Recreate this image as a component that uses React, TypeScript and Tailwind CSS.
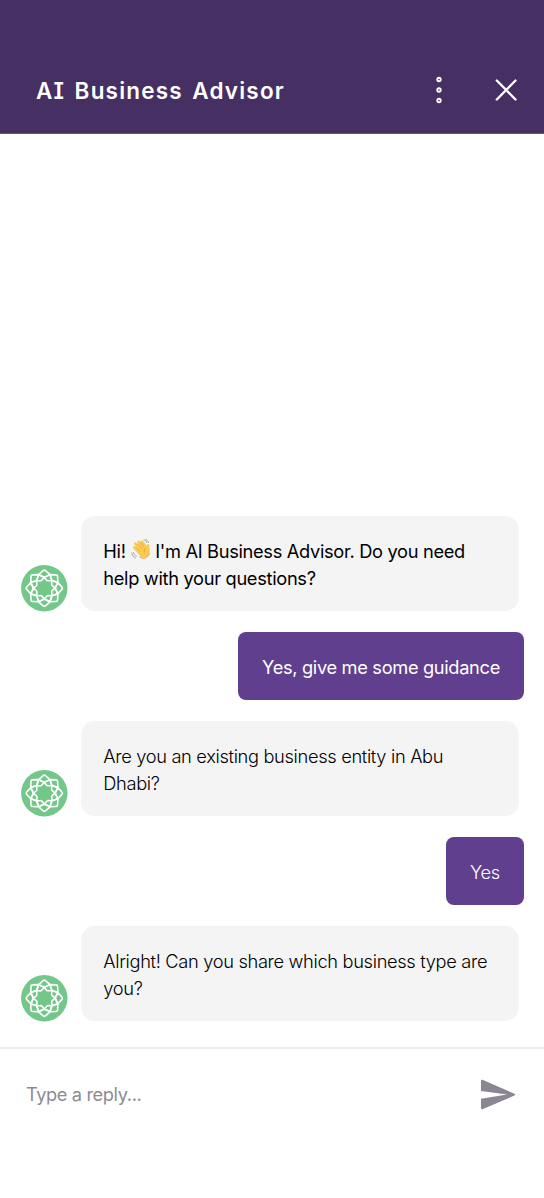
import { clsx } from "clsx";

const petals = [0, 45, 90, 135, 180, 225, 270, 315];

type Message = {
  from: "bot" | "user";
  lines: string[];
  style: string;
};

const messages: Message[] = [
  {
    from: "bot",
    lines: ["Hi! 👋 I'm AI Business Advisor. Do you need", "help with your questions?"],
    style: "font-normal tracking-[-0.32px]",
  },
  { from: "user", lines: ["Yes, give me some guidance"], style: "w-[286px] font-[370] tracking-[-0.34px]" },
  {
    from: "bot",
    lines: ["Are you an existing business entity in Abu", "Dhabi?"],
    style: "font-light tracking-[-0.33px]",
  },
  { from: "user", lines: ["Yes"], style: "w-[78px] font-light tracking-[-0.3px]" },
  {
    from: "bot",
    lines: ["Alright! Can you share which business type are", "you?"],
    style: "font-light tracking-[-0.33px]",
  },
];

export default function App() {
  return (
    <div className="flex h-[1198px] w-[544px] flex-col bg-white font-['Inter',sans-serif]">
      <header className="flex h-[134px] shrink-0 items-end border-b border-[#66527d] bg-[#462f62] pr-[27px] pb-[26px] pl-[36px]">
        <h1 className="flex-1 translate-y-px text-[22.5px] leading-[34px] font-semibold tracking-[1.2px] [word-spacing:2.5px] whitespace-nowrap text-white [font-feature-settings:'cv08']">
          AI Business Advisor
        </h1>
        <button aria-label="Menu" className="mr-[49px]">
          <svg width="14" height="34" viewBox="0 0 14 34" fill="none" stroke="#fff" strokeWidth="1.8">
            <circle cx="7" cy="6.5" r="1.75" />
            <circle cx="7" cy="17" r="1.75" />
            <circle cx="7" cy="27.5" r="1.75" />
          </svg>
        </button>
        <button aria-label="Close">
          <svg width="22" height="34" viewBox="0 0 22 34" stroke="#fff" strokeWidth="2.4" strokeLinecap="round">
            <path d="M1.8 7.5 20.5 26.5M20.5 7.5 1.8 26.5" />
          </svg>
        </button>
      </header>

      <main className="flex flex-1 flex-col justify-end gap-[21px] pb-[26px]">
        {messages.map((m) => (m.from === "bot" ? <BotMessage key={m.lines[0]} {...m} /> : <UserMessage key={m.lines[0]} {...m} />))}
      </main>

      <footer className="flex h-[151px] shrink-0 items-start justify-between border-t-2 border-[#ececec] pt-[30px] pr-[28px] pl-[26px]">
        <span className="-mt-[2px] text-[18.25px] leading-[34px] tracking-[-0.4px] text-[#8e8b93]">Type a reply...</span>
        <button aria-label="Send">
          <svg width="36" height="32" viewBox="0 0 36 32" fill="#8b8792">
            <path d="M1 2.2C1 1 2 .5 3 1L34.4 14.7C35.5 15.2 35.5 16 34.4 16.5L3 30.1C2 30.6 1 30 1 28.9V19.7L27 15.6 1 12Z" />
          </svg>
        </button>
      </footer>
    </div>
  );
}

function BotMessage({ lines, style }: Message) {
  return (
    <div className="flex items-end pl-[21px]">
      <Avatar />
      <div className={clsx("ml-[12.5px] h-[95px] w-[438.5px] rounded-[14px] bg-[#f4f4f4] pt-[22px] pl-[22.8px] text-[18.25px] leading-[27px] text-black", style)}>
        {lines.map((line) => (
          <p key={line} className="whitespace-nowrap">
            <Line text={line} />
          </p>
        ))}
      </div>
    </div>
  );
}

function UserMessage({ lines, style }: Message) {
  return (
    <div className={clsx("mr-[20px] flex h-[68px] items-center justify-center self-end rounded-[8px] bg-[#613f8f] pt-[3px] text-[18.25px] whitespace-nowrap text-white", style)}>
      {lines[0]}
    </div>
  );
}

// swaps the wave emoji for the drawn one
function Line({ text }: { text: string }) {
  const [before, after] = text.split("👋");
  if (after === undefined) return <>{text}</>;
  return (
    <>
      {before}
      <Wave />
      {after}
    </>
  );
}

function Wave() {
  return (
    <svg className="-mt-[7px] -mr-px ml-px inline-block align-middle" width="20" height="21" viewBox="0 0 19 20" fill="none" strokeLinecap="round">
      <g stroke="#fbc94e" strokeWidth="2.7">
        <path d="M3.3 8.2 9 14M4.2 4.5 11 11M7.2 2.8 13 9M10.4 2.8 14.5 8" />
        <path d="M16.3 6.2C15.6 8 16.2 9.5 16.4 11" />
      </g>
      <path d="M5 10.5 12 5.8 15 9C17.5 8 18 10 17.4 13 16.5 17.5 11.5 19.5 8.7 16.3Z" fill="#fbc94e" />
      <path d="M4.8 7.8 8 11M6.6 5 10 8.5M9.7 4.2 12 6.8M13.7 9.2C12.5 10.2 12.3 11.3 12.7 12.4" stroke="#dc9a2b" strokeWidth=".7" />
      <path d="M8.5 17.2C11.5 19.8 16.5 18 17.6 13.5" stroke="#e5a22f" strokeWidth=".9" />
      <path d="M.7 13.2C.9 15.7 2.2 17.3 4.4 18M2.4 13C2.7 14.7 3.4 15.7 5 16.2M12.3.8C13.7 1.2 14.6 2 15 3.4M14 .4C15.6 1 16.4 2 16.7 3.3" stroke="#9a9a9a" strokeWidth=".8" />
    </svg>
  );
}

function Avatar() {
  return (
    <svg className="-mb-px shrink-0" width="47" height="47" viewBox="0 0 47 47" fill="none">
      <circle cx="23.3" cy="23.2" r="23.2" fill="#73c788" />
      <g stroke="#fff" strokeWidth="1.6" strokeLinejoin="round">
        {petals.map((angle) => (
          <g key={angle} transform={`translate(23.3 23.2) rotate(${angle})`}>
            {/* outer petal, then the small diamond between it and the next */}
            <path d="M-5.6-13.6-1.2-17.6Q0-18.8 1.2-17.6L5.6-13.6 0-10.8Z" />
            <path d="M5.6-13.6 0-10.8 2.2-8.1Q3.1-7.2 4.2-7.5L7.6-7.6Z" />
          </g>
        ))}
      </g>
    </svg>
  );
}
